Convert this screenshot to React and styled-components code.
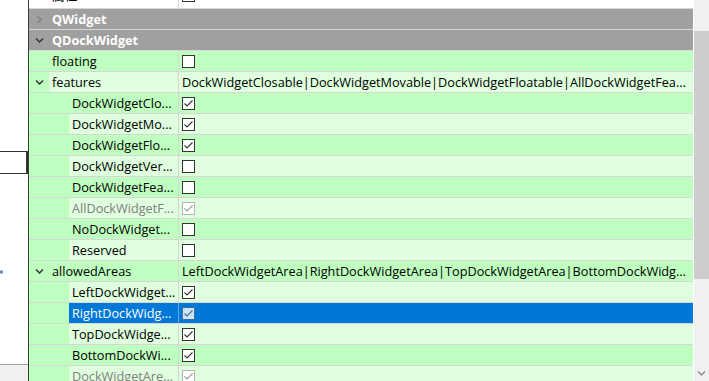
import React from 'react'
import styled, { createGlobalStyle } from 'styled-components'

const GlobalStyle = createGlobalStyle`
	html, body {
		margin: 0;
		padding: 0;
		background: #ffffff;
	}
	body {
		font-family: "Open Sans", "Noto Sans", "Noto Sans CJK SC", sans-serif;
		font-size: 12.7px;
		color: #000;
	}
`;

const DARK = '#bfffbf';
const LIGHT = '#dfffdf';
const GRID = '#d6d6d6';
const SELECT = '#0078d7';

const Window = styled.div`
	width: 709px;
	height: 381px;
	display: flex;
	overflow: hidden;
`;

const LeftPane = styled.div`
	width: 28px;
	flex: none;
	display: flex;
	flex-direction: column;
	border-right: 1px solid #3a3a3a;
	background: #fff;
`;

const EditBox = styled.div`
	margin-top: 151px;
	height: 21px;
	border-top: 1px solid #333;
	border-bottom: 1px solid #333;
	border-right: 2px solid #333;
`;

const LeftBody = styled.div`
	flex: 1;
	position: relative;
	overflow: hidden;
`;

const Arrowish = styled.span`
	position: absolute;
	left: -5px;
	top: 92px;
	font-size: 10px;
	color: #1c3f94;
	font-family: "DejaVu Sans", sans-serif;
`;

const LeftFooter = styled.div`
	height: 16px;
	border-top: 1px solid #a0a0a0;
	background: #f0f0f0;
`;

const Browser = styled.div`
	width: 664px;
	flex: none;
	display: flex;
	flex-direction: column;
	overflow: hidden;
	margin-right: 1px;
`;

const Row = styled.div`
	flex: none;
	height: ${p => p.$h || 20}px;
	display: flex;
	align-items: ${p => (p.$clip ? 'flex-end' : 'stretch')};
	border-bottom: 1px solid ${GRID};
	background: ${p => p.$bg || 'transparent'};
	overflow: hidden;
`;

const NameColumn = styled.div`
	width: 149px;
	flex: none;
	display: flex;
	height: ${p => p.$h || 20}px;
`;

const Branch = styled.div`
	width: ${p => p.$depth * 20 + 20}px;
	flex: none;
	display: flex;
	align-items: center;
	background: ${p => p.$bg || DARK};
`;

const ChevronBox = styled.div`
	width: 20px;
	height: 20px;
	display: flex;
	align-items: center;
	justify-content: center;
`;

const NameCell = styled.div`
	flex: 1;
	min-width: 0;
	display: flex;
	align-items: center;
	padding-left: 3px;
	white-space: nowrap;
	overflow: hidden;
	background: ${p => p.$bg};
	color: ${p => p.$color || '#000'};
	font-weight: ${p => (p.$bold ? 700 : 400)};
`;

const ValueCell = styled.div`
	flex: 1;
	min-width: 0;
	height: ${p => p.$h || 20}px;
	display: flex;
	align-items: center;
	padding-left: 3px;
	padding-right: 6px;
	border-left: 1px solid ${p => p.$line || GRID};
	background: ${p => p.$bg};
	white-space: nowrap;
	overflow: hidden;
`;

const ValueText = styled.span`
	overflow: hidden;
	text-overflow: ellipsis;
`;

const Scrollbar = styled.div`
	width: 15px;
	flex: none;
	display: flex;
	flex-direction: column;
	background: #f0f0f0;
`;

const Track = styled.div`
	height: ${p => p.$h}px;
	flex: ${p => (p.$grow ? 1 : 'none')};
	display: flex;
	align-items: flex-end;
	justify-content: center;
	padding-bottom: ${p => (p.$grow ? 3 : 0)}px;
`;

const Thumb = styled.div`
	height: 248px;
	background: #cdcdcd;
	flex: none;
`;

const Chevron = ({ open, color }) => (
	<svg width="9" height="9" viewBox="0 0 9 9">
		{open ? (
			<polyline points="1,2.5 4.5,6 8,2.5" fill="none" stroke={color} strokeWidth="1.5" />
		) : (
			<polyline points="2.5,1 6,4.5 2.5,8" fill="none" stroke={color} strokeWidth="1.5" />
		)}
	</svg>
);

const Check = ({ checked, disabled, selected }) => {
	const border = disabled ? '#b5b5b5' : selected ? '#3d6f99' : '#333';
	const fill = selected ? '#cce4f7' : '#fff';
	const mark = disabled ? '#9a9a9a' : selected ? '#4a6f8f' : '#333';
	return (
		<svg width="13" height="13" viewBox="0 0 13 13">
			<rect x="0.5" y="0.5" width="12" height="12" fill={fill} stroke={border} />
			{checked && (
				<polyline points="2.5,6.5 5,9 10.5,3.5" fill="none" stroke={mark} strokeWidth="1.1" />
			)}
		</svg>
	);
};

const groups = [
	{ name: 'QWidget', open: false },
	{ name: 'QDockWidget', open: true },
];

const props = [
	{ name: 'floating', depth: 0, check: false },
	{ name: 'features', depth: 0, open: true, value: 'DockWidgetClosable|DockWidgetMovable|DockWidgetFloatable|AllDockWidgetFeatures' },
	{ name: 'DockWidgetClo...', depth: 1, check: true },
	{ name: 'DockWidgetMo...', depth: 1, check: true },
	{ name: 'DockWidgetFlo...', depth: 1, check: true },
	{ name: 'DockWidgetVer...', depth: 1, check: false },
	{ name: 'DockWidgetFea...', depth: 1, check: false },
	{ name: 'AllDockWidgetF...', depth: 1, check: true, disabled: true },
	{ name: 'NoDockWidget...', depth: 1, check: false },
	{ name: 'Reserved', depth: 1, check: false },
	{ name: 'allowedAreas', depth: 0, open: true, value: 'LeftDockWidgetArea|RightDockWidgetArea|TopDockWidgetArea|BottomDockWidgetArea' },
	{ name: 'LeftDockWidget...', depth: 1, check: true },
	{ name: 'RightDockWidg...', depth: 1, check: true, selected: true },
	{ name: 'TopDockWidge...', depth: 1, check: true },
	{ name: 'BottomDockWi...', depth: 1, check: true },
	{ name: 'DockWidgetAre...', depth: 1, check: true, disabled: true },
];

const App = () => {
	return (
		<>
			<GlobalStyle />
			<Window>
				<LeftPane>
					<EditBox />
					<LeftBody>
						<Arrowish>⇒</Arrowish>
					</LeftBody>
					<LeftFooter />
				</LeftPane>
				<Browser>
					<Row $h={8} $clip $bg="#fff">
						<NameColumn $h={28}>
							<Branch $depth={0} $bg="#fff" />
							<NameCell $bg="#fff">属性</NameCell>
						</NameColumn>
						<ValueCell $bg="#fff" $h={26}>
							<Check checked={false} />
						</ValueCell>
					</Row>
					{groups.map(g => (
						<Row key={g.name} $bg="#a0a0a0">
							<NameColumn>
								<Branch $depth={0} $bg="#a0a0a0">
									<ChevronBox>
										<Chevron open={g.open} color={g.open ? '#333' : '#808080'} />
									</ChevronBox>
								</Branch>
								<NameCell $bg="#a0a0a0" $color="#fff" $bold>{g.name}</NameCell>
							</NameColumn>
							<ValueCell $bg="#a0a0a0" $line="#a0a0a0" />
						</Row>
					))}
					{props.map((p, i) => {
						const bg = p.selected ? SELECT : i % 2 === 0 ? DARK : LIGHT;
						const color = p.selected ? '#fff' : p.disabled ? '#808080' : '#000';
						return (
							<Row key={p.name}>
								<NameColumn>
									<Branch $depth={p.depth}>
										{p.open !== undefined && (
											<ChevronBox>
												<Chevron open color="#333" />
											</ChevronBox>
										)}
									</Branch>
									<NameCell $bg={bg} $color={color}>{p.name}</NameCell>
								</NameColumn>
								<ValueCell $bg={bg} $line={p.selected ? '#6aa9e0' : GRID}>
									{p.value ? (
										<ValueText>{p.value}</ValueText>
									) : (
										<Check checked={p.check} disabled={p.disabled} selected={p.selected} />
									)}
								</ValueCell>
							</Row>
						);
					})}
				</Browser>
				<Scrollbar>
					<Track $h={31} />
					<Thumb />
					<Track $grow>
						<Chevron open color="#8a8a8a" />
					</Track>
				</Scrollbar>
			</Window>
		</>
	)
}

export default App
